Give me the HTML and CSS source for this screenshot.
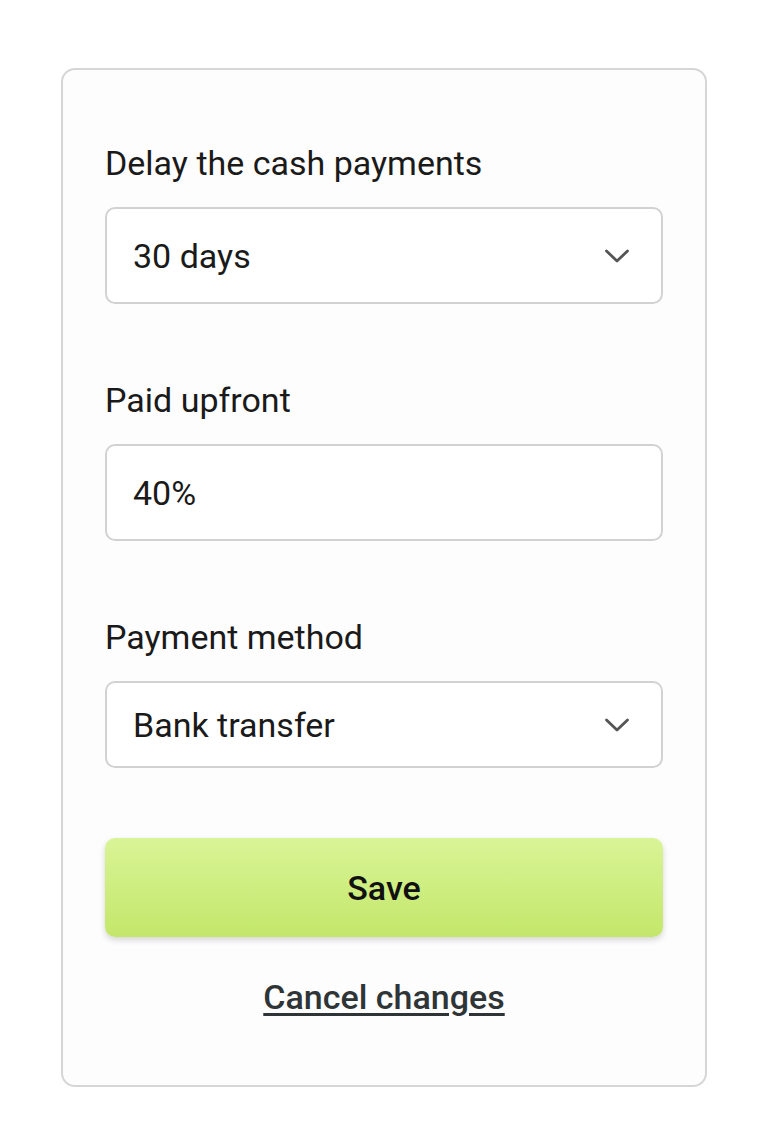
FILE: index.html
```html
<!DOCTYPE html>
<html lang="en">
<head>
    <meta charset="UTF-8">
    <meta name="viewport" content="width=device-width, initial-scale=1.0">
    <title>Payment settings</title>
    <link rel="stylesheet" href="styles.css">
</head>
<body>
    <div class="card">
        <div class="field">
            <label class="label">Delay the cash payments</label>
            <div class="box">
                <span>30 days</span>
                <svg class="chevron" width="26" height="16" viewBox="0 0 26 16"><path d="M2.5 3 L13 13 L23.5 3" fill="none" stroke="#555" stroke-width="2.8" stroke-linecap="round" stroke-linejoin="round"/></svg>
            </div>
        </div>

        <div class="field">
            <label class="label">Paid upfront</label>
            <div class="box">
                <span>40%</span>
            </div>
        </div>

        <div class="field">
            <label class="label">Payment method</label>
            <div class="box box-short">
                <span>Bank transfer</span>
                <svg class="chevron" width="26" height="16" viewBox="0 0 26 16"><path d="M2.5 3 L13 13 L23.5 3" fill="none" stroke="#555" stroke-width="2.8" stroke-linecap="round" stroke-linejoin="round"/></svg>
            </div>
        </div>

        <button class="save">Save</button>
        <a class="cancel" href="#">Cancel changes</a>
    </div>
</body>
</html>
```

FILE: styles.css
```css
body {
    margin: 0;
    padding-top: 68px;
    background-color: #ffffff;
    font-family: Roboto, "Noto Sans", sans-serif;
    color: #1a1a1a;
}

.card {
    width: 646px;
    margin: 0 auto;
    height: 1019px;
    box-sizing: border-box;
    border: 2px solid #d6d6d6;
    border-radius: 14px;
    background-color: #fdfdfd;
    padding: 73px 42px 0 42px;
}

.field {
    margin-bottom: 76px;
}

.label {
    display: block;
    font-size: 34px;
    line-height: 40px;
    margin-bottom: 24px;
}

.box {
    height: 97px;
    box-sizing: border-box;
    border: 2px solid #d2d2d2;
    border-radius: 10px;
    background-color: #fff;
    display: flex;
    align-items: center;
    justify-content: space-between;
    padding: 0 31px 0 26px;
    font-size: 34px;
}

.box-short {
    height: 87px;
}

.field:nth-child(3) {
    margin-bottom: 70px;
}

.chevron {
    display: block;
}

.save {
    display: block;
    width: 100%;
    height: 99px;
    border: none;
    border-radius: 10px;
    background: linear-gradient(#d9f497, #c3e76a);
    box-shadow: 0 3px 6px rgba(0, 0, 0, 0.16);
    font-family: Roboto, sans-serif;
    font-size: 34px;
    font-weight: 500;
    color: #111;
    cursor: pointer;
}

.cancel {
    display: block;
    text-align: center;
    margin-top: 40px;
    font-size: 34px;
    font-weight: 500;
    color: #2f3437;
    text-decoration: underline;
    text-underline-offset: 4px;
}
```
